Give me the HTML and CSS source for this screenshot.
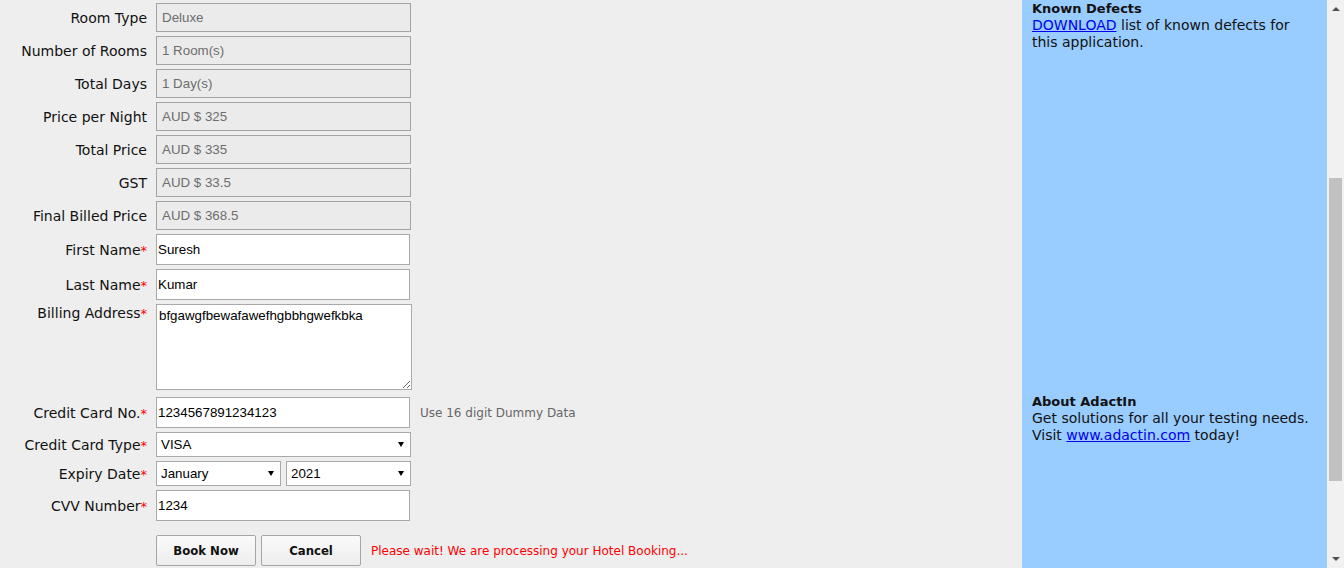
FILE: index.html
```html
<!DOCTYPE html>
<html lang="en">
<head>
<meta charset="utf-8">
<title>Book A Hotel</title>
<link rel="stylesheet" href="styles.css">
</head>
<body>
<div class="page">
  <main class="content">
    <form class="booking">
      <label class="lbl">Room Type</label>
      <div class="field"><input class="ro" value="Deluxe" readonly></div>

      <label class="lbl">Number of Rooms</label>
      <div class="field"><input class="ro" value="1 Room(s)" readonly></div>

      <label class="lbl">Total Days</label>
      <div class="field"><input class="ro" value="1 Day(s)" readonly></div>

      <label class="lbl">Price per Night</label>
      <div class="field"><input class="ro" value="AUD $ 325" readonly></div>

      <label class="lbl">Total Price</label>
      <div class="field"><input class="ro" value="AUD $ 335" readonly></div>

      <label class="lbl">GST</label>
      <div class="field"><input class="ro" value="AUD $ 33.5" readonly></div>

      <label class="lbl">Final Billed Price</label>
      <div class="field"><input class="ro" value="AUD $ 368.5" readonly></div>

      <label class="lbl">First Name<span class="req">*</span></label>
      <div class="field"><input class="txt" value="Suresh"></div>

      <label class="lbl">Last Name<span class="req">*</span></label>
      <div class="field"><input class="txt" value="Kumar"></div>

      <label class="lbl lbl-top">Billing Address<span class="req">*</span></label>
      <div class="field field-area"><textarea class="area">bfgawgfbewafawefhgbbhgwefkbka</textarea></div>

      <label class="lbl">Credit Card No.<span class="req">*</span></label>
      <div class="field field-row"><input class="txt" value="1234567891234123"><span class="hint">Use 16 digit Dummy Data</span></div>

      <label class="lbl">Credit Card Type<span class="req">*</span></label>
      <div class="field"><div class="sel sel-wide"><select><option>VISA</option></select></div></div>

      <label class="lbl">Expiry Date<span class="req">*</span></label>
      <div class="field field-row tight">
        <div class="sel sel-half"><select><option>January</option></select></div>
        <div class="sel sel-half"><select><option>2021</option></select></div>
      </div>

      <label class="lbl">CVV Number<span class="req">*</span></label>
      <div class="field"><input class="txt" value="1234"></div>

      <div class="field field-row actions">
        <button type="button" class="btn">Book Now</button>
        <button type="button" class="btn">Cancel</button>
        <span class="wait">Please wait! We are processing your Hotel Booking...</span>
      </div>
    </form>
  </main>

  <aside class="sidebar">
    <section class="block">
      <h3>Known Defects</h3>
      <p><a href="#">DOWNLOAD</a> list of known defects for this application.</p>
    </section>
    <section class="block about">
      <h3>About AdactIn</h3>
      <p>Get solutions for all your testing needs. Visit <a href="#">www.adactin.com</a> today!</p>
    </section>
  </aside>

  <div class="scrollbar">
    <span class="arrow up"></span>
    <div class="track"><span class="thumb"></span></div>
    <span class="arrow down"></span>
  </div>
</div>
</body>
</html>
```
FILE: styles.css
```css
html, body {
  margin: 0;
  padding: 0;
  height: 100%;
  overflow: hidden;
}

body {
  font-family: "DejaVu Sans", Verdana, sans-serif;
  font-size: 14px;
  color: #111;
  background: #eeeeee;
}

.page {
  display: flex;
  height: 568px;
}

.content {
  flex: 1;
  background: #eeeeee;
}

.booking {
  display: grid;
  grid-template-columns: 147px auto;
  column-gap: 9px;
  row-gap: 4px;
  align-items: center;
  padding-top: 3px;
  margin: 0;
}

.lbl {
  text-align: right;
  line-height: 17px;
  padding-top: 2px;
  white-space: nowrap;
  color: #111;
}

.lbl-top {
  align-self: start;
  padding-top: 1px;
}

.req {
  color: #ff0000;
  font-size: 13px;
}

.field {
  display: flex;
}

.field-row {
  align-items: center;
  gap: 10px;
}

.field-row.tight {
  gap: 5px;
}

.field-area {
  margin-bottom: 3px;
}

input, textarea, select, button {
  font-family: "Liberation Sans", Arial, sans-serif;
  font-size: 13.33px;
  box-sizing: border-box;
  margin: 0;
}

.ro {
  width: 255px;
  height: 29px;
  border: 1px solid #a3a3a3;
  background: #ebebeb;
  color: #6d6d6d;
  padding: 0 5px;
  outline: none;
}

.txt {
  width: 254px;
  height: 31px;
  border: 1px solid #a9a9a9;
  background: #ffffff;
  color: #000;
  padding: 0 1px;
  outline: none;
}

.area {
  width: 256px;
  height: 86px;
  border: 1px solid #a9a9a9;
  background: #ffffff;
  color: #000;
  padding: 3px 2px;
  resize: both;
  outline: none;
}

.hint {
  font-family: "DejaVu Sans", Verdana, sans-serif;
  font-size: 12px;
  color: #666666;
}

.sel {
  position: relative;
  display: flex;
}

.sel select {
  appearance: none;
  -webkit-appearance: none;
  width: 100%;
  height: 25px;
  border: 1px solid #a9a9a9;
  border-radius: 0;
  background: #ffffff;
  color: #000;
  padding: 0 4px;
  outline: none;
}

.sel::after {
  content: "";
  position: absolute;
  right: 7px;
  top: 10px;
  border-left: 3.5px solid transparent;
  border-right: 3.5px solid transparent;
  border-top: 5px solid #000;
  pointer-events: none;
}

.sel-wide {
  width: 255px;
}

.sel-half {
  width: 125px;
}

.actions {
  grid-column: 2;
  margin-top: 10px;
  gap: 5px;
}

.btn {
  width: 100px;
  height: 31px;
  border: 1px solid #a6a6a6;
  border-radius: 2px;
  background: linear-gradient(#fafafa, #ededed);
  color: #111;
  font-family: "DejaVu Sans Condensed", "DejaVu Sans", sans-serif;
  font-weight: bold;
  font-size: 13px;
  padding: 0;
}

.wait {
  margin-left: 5px;
  font-family: "DejaVu Sans", Verdana, sans-serif;
  font-size: 12px;
  color: #ff0000;
  white-space: nowrap;
}

.sidebar {
  width: 305px;
  box-sizing: border-box;
  background: #99ccff;
  padding: 0 10px;
  line-height: 17px;
  color: #111;
}

.block h3 {
  margin: 0;
  font-size: 13px;
  font-weight: bold;
  line-height: 17px;
}

.block p {
  margin: 0;
}

.block a {
  color: #0000ee;
  text-decoration: underline;
}

.about {
  margin-top: 342px;
}

.scrollbar {
  width: 17px;
  background: #f1f1f1;
  display: flex;
  flex-direction: column;
  align-items: center;
}

.arrow {
  width: 0;
  height: 0;
  border-left: 4px solid transparent;
  border-right: 4px solid transparent;
}

.arrow.up {
  margin-top: 7px;
  border-bottom: 4px solid #505050;
}

.arrow.down {
  margin-bottom: 7px;
  border-top: 4px solid #505050;
}

.track {
  flex: 1;
  width: 100%;
  display: flex;
  flex-direction: column;
  align-items: center;
}

.thumb {
  margin-top: 167px;
  width: 13px;
  height: 303px;
  background: #c1c1c1;
}
```
